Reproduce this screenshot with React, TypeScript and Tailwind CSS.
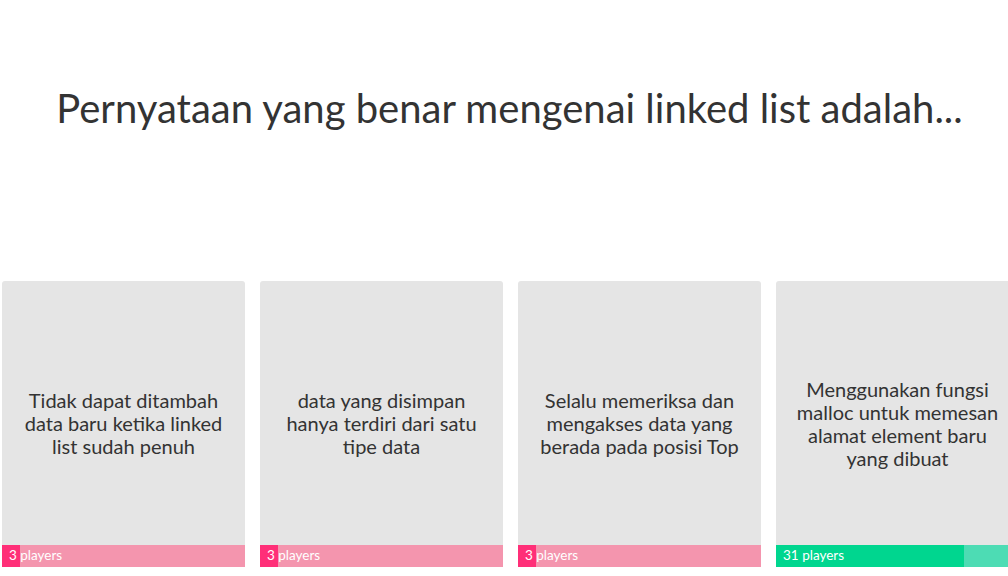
const options = [
  { text: 'Tidak dapat ditambah data baru ketika linked list sudah penuh', players: 3, correct: false },
  { text: 'data yang disimpan hanya terdiri dari satu tipe data', players: 3, correct: false },
  { text: 'Selalu memeriksa dan mengakses data yang berada pada posisi Top', players: 3, correct: false },
  { text: 'Menggunakan fungsi malloc untuk memesan alamat element baru yang dibuat', players: 31, correct: true },
];

const total = options.reduce((s, o) => s + o.players, 0);

export default function App() {
  return (
    <div className="w-[1008px] h-[576px] overflow-hidden bg-white text-[#333333]" style={{ fontFamily: 'Lato, "Open Sans", sans-serif' }}>
      <div className="w-[1019px] flex flex-col">
        {/* Question */}
        <div className="h-[281px] flex items-start justify-center pt-[84px]">
          <h1 className="text-[40px] leading-[48px] font-normal">Pernyataan yang benar mengenai linked list adalah...</h1>
        </div>

        {/* Answer cards */}
        <div className="flex gap-[15px] pl-[2px]">
          {options.map((o, i) => (
            <div key={i} className="w-[243px] h-[286px] shrink-0 bg-[#e5e5e5] rounded-t-[3px] flex flex-col overflow-hidden">
              <div className="flex-1 flex items-center justify-center px-[18px] pt-[21px]">
                <p className="text-center text-[20px] leading-[23px]">{o.text}</p>
              </div>
              <div className={`relative h-[22px] flex items-center ${o.correct ? 'bg-[#4ddcb4]' : 'bg-[#f495ae]'}`}>
                <div
                  className={`absolute left-0 top-0 h-full ${o.correct ? 'bg-[#00d68f]' : 'bg-[#ff2f78]'}`}
                  style={{ width: `${(o.players / total) * 100}%` }}
                />
                <span className="relative pl-[7px] text-[13.5px] leading-none text-white">{o.players} players</span>
              </div>
            </div>
          ))}
        </div>
      </div>
    </div>
  );
}
